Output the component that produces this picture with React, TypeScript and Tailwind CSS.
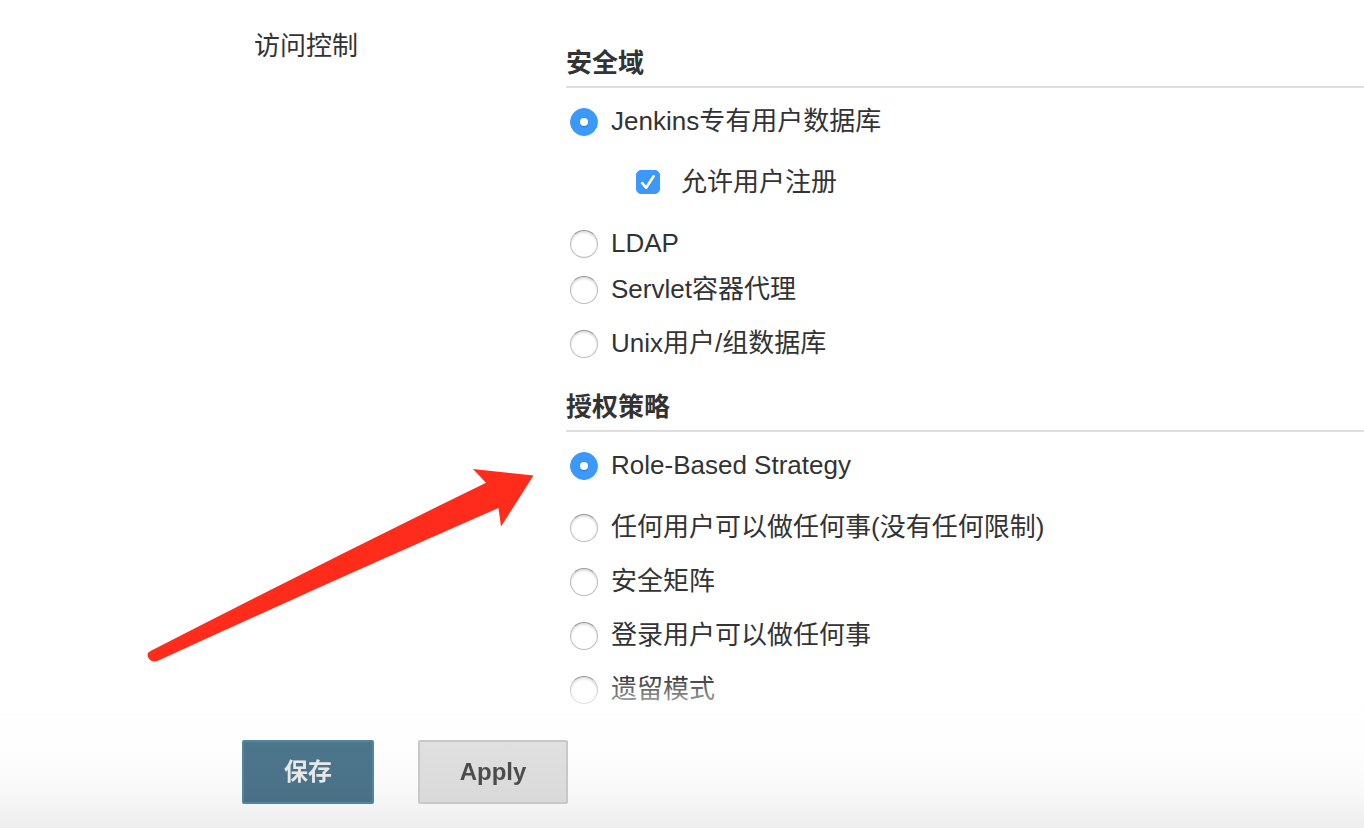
import { useState } from "react";

type Option = { id: string; label: string; spacing: string };

const REALMS: Option[] = [
  { id: "ldap", label: "LDAP", spacing: "mt-[26px]" },
  { id: "servlet", label: "Servlet容器代理", spacing: "mt-[10px]" },
  { id: "unix", label: "Unix用户/组数据库", spacing: "mt-[18px]" },
];

const STRATEGIES: Option[] = [
  { id: "role", label: "Role-Based Strategy", spacing: "mt-4" },
  { id: "anyone", label: "任何用户可以做任何事(没有任何限制)", spacing: "mt-[26px]" },
  { id: "matrix", label: "安全矩阵", spacing: "mt-[18px]" },
  { id: "loggedin", label: "登录用户可以做任何事", spacing: "mt-[18px]" },
  { id: "legacy", label: "遗留模式", spacing: "mt-[18px]" },
];

type RadioRowProps = {
  option: Option;
  name: string;
  value: string;
  onChange: (id: string) => void;
};

function RadioRow({ option, name, value, onChange }: RadioRowProps) {
  const inputId = `${name}-${option.id}`;
  return (
    <div className={`flex h-9 items-center gap-[13px] pl-1 ${option.spacing}`}>
      <span className="grid size-7 shrink-0">
        <input
          id={inputId}
          type="radio"
          name={name}
          checked={value === option.id}
          onChange={() => onChange(option.id)}
          className="peer col-start-1 row-start-1 size-7 appearance-none rounded-full border border-[#bdbdbd] border-t-[#979797] bg-white shadow-[inset_0_2px_2px_rgba(0,0,0,0.12)] checked:border-[#3b99fc] checked:bg-[#3b99fc] checked:shadow-none"
        />
        <span className="pointer-events-none col-start-1 row-start-1 hidden size-2 place-self-center rounded-full bg-white shadow-[0_1px_1px_rgba(0,0,0,0.25)] peer-checked:block" />
      </span>
      <label htmlFor={inputId} className="pb-0.5 leading-8">
        {option.label}
      </label>
    </div>
  );
}

function SectionTitle({ children }: { children: string }) {
  return (
    <h2 className="border-b-2 border-[#dedede] pt-0.5 pb-1.5 leading-[34px] font-bold">
      {children}
    </h2>
  );
}

export default function App() {
  const [realm, setRealm] = useState("jenkins");
  const [signup, setSignup] = useState(true);
  const [strategy, setStrategy] = useState("role");

  return (
    <form
      onSubmit={(e) => e.preventDefault()}
      className="relative min-h-screen overflow-hidden bg-white font-['Liberation_Sans','Noto_Sans_CJK_SC',sans-serif] text-[26px] text-[#333333]"
    >
      <main className="flex pt-7 pb-[120px] pl-[254px]">
        <div className="w-[312px] shrink-0 leading-9">访问控制</div>
        <div className="min-w-0 grow pt-4">
          <section>
            <SectionTitle>安全域</SectionTitle>
            <RadioRow
              option={{ id: "jenkins", label: "Jenkins专有用户数据库", spacing: "mt-4" }}
              name="realm"
              value={realm}
              onChange={setRealm}
            />
            <div className="mt-6 flex h-9 items-center gap-[21px] pl-[70px]">
              <span className="grid size-6 shrink-0">
                <input
                  id="signup"
                  type="checkbox"
                  checked={signup}
                  onChange={(e) => setSignup(e.target.checked)}
                  className="peer col-start-1 row-start-1 size-6 appearance-none rounded-[5px] border border-[#bdbdbd] bg-white checked:border-[#3b99fc] checked:bg-[#3b99fc]"
                />
                <svg
                  viewBox="0 0 24 24"
                  aria-hidden="true"
                  className="pointer-events-none col-start-1 row-start-1 hidden size-6 peer-checked:block"
                >
                  <path
                    d="M6.2 13.2 10.2 17.8 17.700 6.300"
                    fill="none"
                    stroke="#2876c8"
                    strokeOpacity="0.45"
                    strokeWidth="2.700"
                    strokeLinecap="round"
                    strokeLinejoin="round"
                    transform="translate(0 1)"
                  />
                  <path
                    d="M6.2 13.2 10.2 17.8 17.700 6.300"
                    fill="none"
                    stroke="#fff"
                    strokeWidth="2.700"
                    strokeLinecap="round"
                    strokeLinejoin="round"
                  />
                </svg>
              </span>
              <label htmlFor="signup" className="leading-8">
                允许用户注册
              </label>
            </div>
            {REALMS.map((o) => (
              <RadioRow key={o.id} option={o} name="realm" value={realm} onChange={setRealm} />
            ))}
          </section>
          <section className="mt-[26px]">
            <SectionTitle>授权策略</SectionTitle>
            {STRATEGIES.map((o) => (
              <RadioRow
                key={o.id}
                option={o}
                name="strategy"
                value={strategy}
                onChange={setStrategy}
              />
            ))}
          </section>
        </div>
      </main>

      <svg
        viewBox="0 0 390 196"
        aria-hidden="true"
        className="pointer-events-none absolute top-[467px] left-[146px] w-[390px]"
      >
        <path
          d="M327 2 387.5 8.500 355 59.500 352.500 41Q190 112 13 193.200C8 195.500 4.500 194.500 2.500 191C.8 187.500 1.200 185.500 5 183.700Q172 98 340 15.700Z"
          fill="#ff2c1c"
        />
      </svg>

      <footer className="fixed inset-x-0 bottom-0 flex gap-11 bg-[linear-gradient(to_bottom,rgba(255,255,255,0)_4px,rgba(254,254,254,1)_52px,#fefefe_76px,#f9f9f9_118px,#ededed_100%)] pt-[68px] pb-6 pl-[242px]">
        <button
          type="submit"
          className="h-16 w-[132px] rounded-[2px] border-2 border-[#5086a0] bg-linear-to-b from-[#4c768c] to-[#4a7086] text-2xl font-bold text-[#e8e8e8]"
        >
          保存
        </button>
        <button
          type="button"
          className="h-16 w-[150px] rounded-[2px] border-2 border-[#c8c8c8] bg-linear-to-b from-[#e0e0e0] to-[#d9d9d9] text-2xl font-bold text-[#4d4d4d]"
        >
          Apply
        </button>
      </footer>
    </form>
  );
}
